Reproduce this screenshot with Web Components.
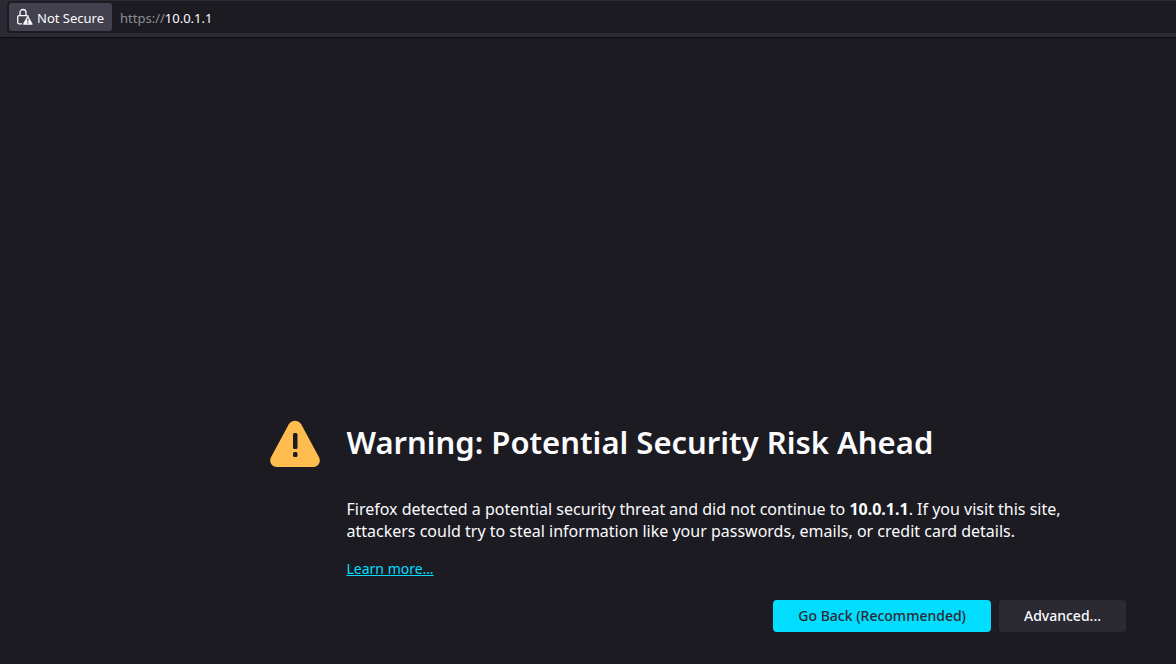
<!DOCTYPE html>
<html lang="en">
<head>
<meta charset="utf-8">
<title>Warning: Potential Security Risk Ahead</title>
<style>
  html, body { margin: 0; }
  body {
    background: #1c1b22;
    color: #fbfbfe;
    font-family: "Segoe UI", "Noto Sans", "Open Sans", sans-serif;
  }
</style>
</head>
<body>
<browser-window>
  <address-bar slot="bar" scheme="https://" host="10.0.1.1"></address-bar>
  <cert-error host="10.0.1.1">
    <span slot="title">Warning: Potential Security Risk Ahead</span>
    <action-button slot="actions" primary>Go Back (Recommended)</action-button>
    <action-button slot="actions">Advanced...</action-button>
  </cert-error>
</browser-window>

<script>
class BaseElement extends HTMLElement {
  constructor() {
    super();
    this.attachShadow({ mode: "open" }).innerHTML = this.constructor.markup;
  }
}

customElements.define("browser-window", class extends BaseElement {
  static markup = `
    <style>
      :host { display: flex; flex-direction: column; min-height: 100vh; }
      main { flex: 1; display: flex; flex-direction: column; justify-content: flex-end; }
    </style>
    <slot name="bar"></slot>
    <main><slot></slot></main>`;
});

customElements.define("address-bar", class extends BaseElement {
  static markup = `
    <style>
      :host { display: block; background: #2b2a33; border-bottom: 1px solid #0c0c0d; padding: 1px 0 4px 7px; }
      .field { display: flex; align-items: center; gap: 8px; height: 32px; padding-left: 2px;
        box-sizing: border-box; background: #1c1b22; border-radius: 4px 0 0 4px; font-size: 13px; line-height: 18px; }
      button { display: flex; align-items: center; gap: 4px; height: 28px; padding: 0 8px;
        border: 0; border-radius: 3px; background: #42414d; color: #fbfbfe; font: inherit; white-space: nowrap; }
      svg { display: block; }
      button span, .url { padding-top: 2px; }
      .url { color: #8f8e96; }
      .url b { color: #fbfbfe; font-weight: 400; }
    </style>
    <div class="field">
      <button type="button">
        <svg width="16" height="18" viewBox="0 0 16 18" aria-hidden="true">
          <path d="M3 8V4.500a3 3 0 0 1 6 0V8" fill="none" stroke="#fbfbfe" stroke-width="1.300"/>
          <path d="M11.300 8.500Q11.100 7.700 10.300 7.700H1.900Q.7 7.700.7 9.100v5.300q0 1.400 1.400 1.400H5" fill="none" stroke="#fbfbfe" stroke-width="1.300"/>
          <path d="M10.300 8.200q.5-.8 1 0l4.200 7.500q.4 1-.6 1H6.700q-1 0-.6-1z" fill="#fbfbfe" stroke="#42414d" stroke-width=".8" paint-order="stroke"/>
          <path d="M10.800 10.500v2.700M10.800 14.200v1.300" stroke="#42414d" stroke-width="1.300"/>
        </svg>
        <span>Not Secure</span>
      </button>
      <div class="url"><span></span><b></b></div>
    </div>`;
  connectedCallback() {
    this.shadowRoot.querySelector(".url span").textContent = this.getAttribute("scheme");
    this.shadowRoot.querySelector(".url b").textContent = this.getAttribute("host");
  }
});

customElements.define("warning-icon", class extends BaseElement {
  static markup = `
    <style>:host, svg { display: block; }</style>
    <svg width="50" height="48" viewBox="0 0 50 48" aria-hidden="true">
      <path d="M18.800 4.300C21.500-.4 28.500-.4 31.200 4.300L49 37.300C51.300 42 48.300 47 43.300 47H6.700C1.700 47-1.300 42 1 37.300Z" fill="#ffbd4f"/>
      <rect x="23" y="13" width="4.500" height="16" rx="1.500" fill="#1c1b22"/>
      <rect x="23" y="32" width="4.500" height="5" rx="1.500" fill="#1c1b22"/>
    </svg>`;
});

customElements.define("action-button", class extends BaseElement {
  static markup = `
    <style>
      :host { display: block; }
      button { display: block; height: 32px; padding: 0 25px; border: 0; border-radius: 4px;
        background: #2b2a33; color: #fbfbfe; font-family: inherit;
        font-size: 14px; font-weight: 500; line-height: 32px; white-space: nowrap; }
      :host([primary]) button { background: #00ddff; color: #2b2a33; }
    </style>
    <button type="button"><slot></slot></button>`;
});

customElements.define("cert-error", class extends BaseElement {
  static markup = `
    <style>
      :host { display: grid; grid-template-columns: 50px minmax(0, 1fr); column-gap: 26px;
        padding: 32px 50px 32px 23%; }
      h1 { margin: 0 0 34px; font-size: 31px; font-weight: 600; line-height: 44px; }
      p { margin: 0 0 16px; font-size: 16px; line-height: 22px; }
      a { display: block; width: max-content; color: #00ddff; font-size: 14px; line-height: 22px; }
      .actions { display: flex; justify-content: flex-end; gap: 8px; margin-top: 20px; }
    </style>
    <warning-icon></warning-icon>
    <section>
      <h1><slot name="title"></slot></h1>
      <p>Firefox detected a potential security threat and did not continue to <b></b>. If you visit this site, attackers could try to steal information like your passwords, emails, or credit card details.</p>
      <a href="#">Learn more…</a>
      <div class="actions"><slot name="actions"></slot></div>
    </section>`;
  connectedCallback() {
    this.shadowRoot.querySelector("b").textContent = this.getAttribute("host");
  }
});
</script>
</body>
</html>
